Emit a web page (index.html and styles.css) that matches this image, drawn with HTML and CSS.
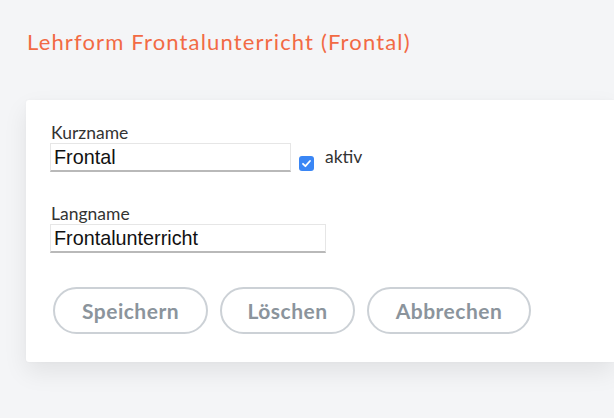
FILE: index.html
```html
<!DOCTYPE html>
<html lang="de">
<head>
<meta charset="utf-8">
<title>Lehrform</title>
<link rel="stylesheet" href="styles.css">
</head>
<body>
<h1 class="title">Lehrform Frontalunterricht (Frontal)</h1>
<div class="card">
  <div class="field">
    <label class="label">Kurzname</label>
    <div class="row">
      <div class="input short">Frontal</div>
      <span class="check"><svg width="15" height="15" viewBox="0 0 15 15"><rect x="0" y="0" width="15" height="15" rx="3" fill="#3a86f5"/><path d="M4 7.8 L6.4 10.2 L11 5" fill="none" stroke="#fff" stroke-width="1.8" stroke-linecap="round" stroke-linejoin="round"/></svg></span>
      <span class="check-label">aktiv</span>
    </div>
  </div>
  <div class="field second">
    <label class="label">Langname</label>
    <div class="input long">Frontalunterricht</div>
  </div>
  <div class="buttons">
    <button class="btn w1">Speichern</button>
    <button class="btn w2">Löschen</button>
    <button class="btn w3">Abbrechen</button>
  </div>
</div>
</body>
</html>
```
FILE: styles.css
```css
html, body {
  margin: 0;
  padding: 0;
  background: #f4f5f7;
  overflow: hidden;
  height: 418px;
}
body {
  font-family: Lato, "Open Sans", sans-serif;
}
.title {
  margin: 0;
  padding: 29px 0 0 27px;
  font-size: 22px;
  line-height: 26px;
  font-weight: 400;
  color: #f26a44;
  letter-spacing: 1.15px;
}
.card {
  margin: 45px 0 0 26px;
  width: 588px;
  background: #fff;
  border-radius: 3px 0 0 3px;
  box-shadow: 0 10px 24px rgba(0, 0, 0, 0.08), 0 0 3px rgba(0,0,0,0.03);
  padding: 23px 24px 28px 24px;
  box-sizing: border-box;
}
.field {
  display: flex;
  flex-direction: column;
  align-items: flex-start;
}
.field.second {
  margin-top: 32px;
}
.label {
  font-size: 17.5px;
  line-height: 20px;
  color: #333;
  margin-left: 1px;
}
.row {
  display: flex;
  align-items: center;
}
.input {
  box-sizing: border-box;
  height: 29px;
  border: 1px solid #e6e6e6;
  border-bottom: 2px solid #b9b9b9;
  font-family: "Liberation Sans", Arial, sans-serif;
  font-size: 19.8px;
  line-height: 26px;
  padding-left: 3px;
  color: #111;
}
.input.short { width: 241px; }
.input.long { width: 276px; }
.check {
  display: inline-flex;
  margin-left: 8px;
  margin-top: 12px;
}
.check-label {
  margin-left: 11px;
  font-size: 17.5px;
  color: #333;
  margin-top: -2px;
}
.buttons {
  display: flex;
  gap: 12px;
  margin-top: 34px;
}
.btn {
  height: 47px;
  border: 2px solid #ccd1d6;
  border-radius: 24px;
  background: #fff;
  color: #8b949c;
  font-family: Lato, sans-serif;
  font-weight: 700;
  font-size: 21px;
  letter-spacing: 0.5px;
  padding: 0;
  box-sizing: border-box;
  margin-left: 3px;
}
.btn + .btn { margin-left: 0; }
.w1 { width: 155px; }
.w2 { width: 135px; }
.w3 { width: 164px; }
```
